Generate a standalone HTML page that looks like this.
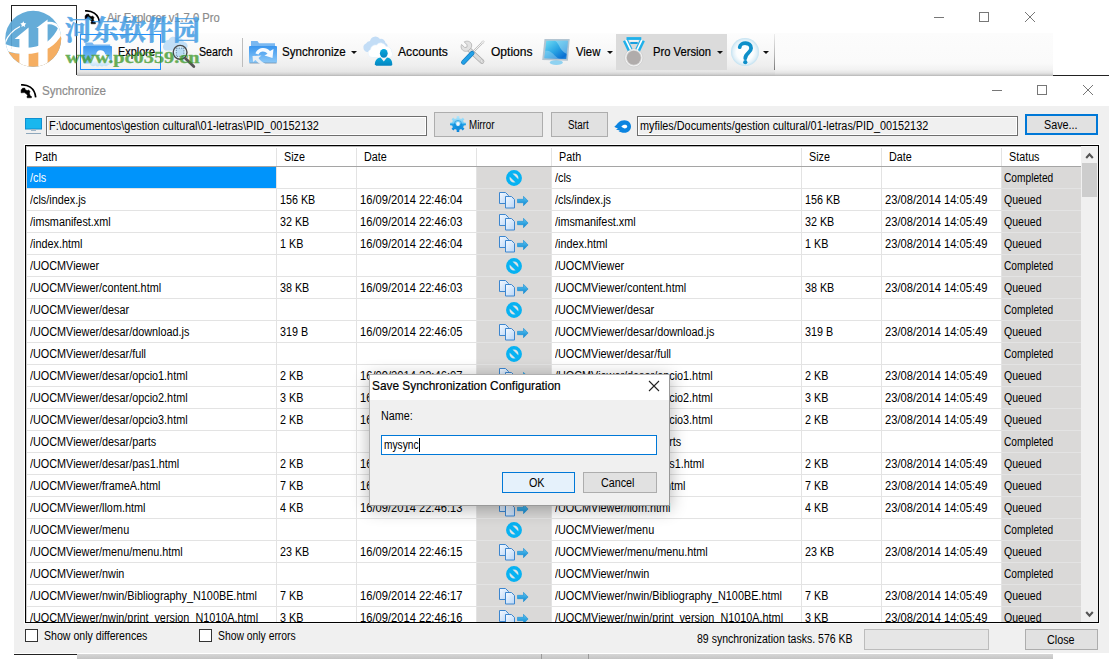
<!DOCTYPE html>
<html><head><meta charset="utf-8"><title>Air Explorer</title>
<style>
*{margin:0;padding:0;box-sizing:border-box}
html,body{width:1109px;height:659px;overflow:hidden;background:#fff}
body{position:relative;font-family:"Liberation Sans",sans-serif;font-size:11px;color:#000}
.a{position:absolute}
.t{position:absolute;white-space:nowrap;font-size:12px;line-height:14px;transform:scaleX(.896);transform-origin:0 50%}
.s{position:absolute;white-space:nowrap;font-size:13px;-webkit-text-stroke:.2px currentColor;line-height:16px;transform-origin:0 50%}
.ic{position:absolute;overflow:visible}
svg{position:absolute;overflow:visible}
.btn{position:absolute;background:#e1e1e1;border:1px solid #adadad}
.vl{position:absolute;width:1px;background:#e3e3e3}
.hl{position:absolute;height:1px;background:#e3e3e3}
.arr{position:absolute;width:0;height:0;border-left:3px solid transparent;border-right:3px solid transparent;border-top:3px solid #111}
</style></head><body>
<svg width="0" height="0" style="position:absolute">
<defs>
<linearGradient id="gpage" x1="0" y1="0" x2="1" y2="1"><stop offset="0" stop-color="#f4f9ff"/><stop offset="1" stop-color="#b9d6f7"/></linearGradient>
<linearGradient id="garr" x1="0" y1="0" x2="0" y2="1"><stop offset="0" stop-color="#5cc6f2"/><stop offset="1" stop-color="#0d86cf"/></linearGradient>
<g id="copy">
<path d="M1.5 0.5h6l3 3v8h-9z" fill="url(#gpage)" stroke="#3c86cf" stroke-width="1"/>
<path d="M7.5 4.5h6l3 3v8.500h-9z" fill="url(#gpage)" stroke="#3c86cf" stroke-width="1"/>
<path d="M19.500 7.300h6v-3l4.600 4.700-4.600 4.700v-3h-6z" fill="url(#garr)" stroke="#1a8ed6" stroke-width=".6" stroke-linejoin="round"/>
</g>
<g id="ban">
<circle cx="9" cy="9" r="6.200" fill="#dde3e6" stroke="#07b2f2" stroke-width="3.500"/>
<path d="M4.200 4.200L13.800 13.800" stroke="#07b2f2" stroke-width="4.200"/>
</g>
</defs></svg>

<!-- background outline (top-left) -->
<div class="a" style="left:11px;top:5px;width:66px;height:1px;background:#222"></div>
<div class="a" style="left:11px;top:5px;width:1px;height:44px;background:#222"></div>
<div class="a" style="left:76px;top:5px;width:1px;height:70px;background:#333"></div>

<!-- MAIN WINDOW -->
<div class="a" id="toolbar" style="left:77px;top:33px;width:698px;height:43px;background:linear-gradient(#fdfdfd 0%,#f8f8f8 40%,#efefef 75%,#e6e6e6 90%,#d2d2d2 96%,#b4b4b4 100%)"></div>
<div class="a" style="left:775px;top:33px;width:278px;height:43px;background:linear-gradient(#fcfcfc 0%,#fafafa 70%,#f2f2f2 85%,#e4e4e4 93%,#cfcfcf 97%,#b4b4b4 100%)"></div>
<div class="a" style="left:1053px;top:75px;width:56px;height:1px;background:#222"></div>
<!-- title -->
<svg style="left:84px;top:9.200px" width="17" height="16" viewBox="0 0 17 16"><path d="M1.100 1.900C7 1.200 14.800 4.500 15.700 14.400" fill="none" stroke="#000" stroke-width="1.700"/><path d="M1.100 6.900L2.500 5.300 4.700 5.100 5.500 6.900 7.600 7.600 8.600 6.900 10 8.400 9.400 10.200 10.200 12.800 11.600 13.600 11.400 14.800H7.200L7 13.600 7.600 12.400 6.300 10.800 4.300 9.600 1.100 9.800z" fill="#000" stroke="#000" stroke-width=".5" stroke-linejoin="round"/></svg>
<span class="s" id="tTitle" style="transform:scaleX(0.862);left:107px;top:10px;color:#8c8c8c">Air Explorer v1.7.0 Pro</span>
<!-- main window controls -->
<div class="a" style="left:934px;top:17px;width:10px;height:1px;background:#777"></div>
<div class="a" style="left:979px;top:12px;width:10px;height:10px;border:1px solid #777"></div>
<svg style="left:1025px;top:12px" width="10" height="10" viewBox="0 0 10 10"><path d="M0 0L10 10M10 0L0 10" stroke="#777" stroke-width="1"/></svg>

<!-- toolbar items -->
<div class="a" style="left:80px;top:34px;width:81px;height:36px;border:1px solid #1e90ff;background:rgba(255,255,255,.3)"></div>
<!-- explore icon -->
<svg style="left:82px;top:41px" width="31" height="28" viewBox="0 0 31 28">
<defs><linearGradient id="gf" x1="0" y1="0" x2="0" y2="1"><stop offset="0" stop-color="#3b96ee"/><stop offset="1" stop-color="#8cc9f8"/></linearGradient>
<linearGradient id="gcl" x1="0" y1="0" x2="0" y2="1"><stop offset="0" stop-color="#fff"/><stop offset=".6" stop-color="#f4f9fe"/><stop offset="1" stop-color="#bfe0f6"/></linearGradient></defs>
<path d="M3.300 1.600h7l1.500 2h16.400v5H3.300z" fill="#7ab8f1"/>
<rect x="1.200" y="5" width="28.800" height="17.500" rx="1" fill="url(#gf)"/>
<path d="M9 24.500a3.600 3.600 0 0 1 .6-6.500 4.800 4.800 0 0 1 4.700-4.200 4 4 0 0 1 4.200-4.600 5 5 0 0 1 4.700 4 4.500 4.500 0 0 1 3.600 4.600 3.600 3.600 0 0 1-.8 6.500q-2 1.500-4 .3-2 1.800-4.200 0-2.300 1.700-4.400 0-2.300 1.200-4.400-.1z" fill="url(#gcl)"/>
</svg>
<span class="s" id="tExplore" style="transform:scaleX(0.84);left:118px;top:44px">Explore</span>
<!-- search icon -->
<svg style="left:163px;top:35px" width="34" height="34" viewBox="0 0 34 34">
<path d="M2.500 15.500a4 4 0 0 1-1.500-6.500 4.500 4.500 0 0 1 4.500-4 5 5 0 0 1 8.500-1.500 5 5 0 0 1 7 3.500 4 4 0 0 1 3.500 5l-3 4z" fill="#b7d9f6" opacity=".85"/>
<circle cx="17.100" cy="17.300" r="6.900" fill="#d4ecfa" stroke="#4a4a4a" stroke-width="1.400"/>
<rect x="13.300" y="13.200" width="7.600" height="8.200" fill="#b9ddf5" stroke="#3d5a78" stroke-width=".7" stroke-dasharray="1.200 1.200"/>
<path d="M22.500 23.500l8.300 8" stroke="#555" stroke-width="2.800" stroke-linecap="round"/>
</svg>
<span class="s" id="tSearch" style="transform:scaleX(0.82);left:199px;top:44px">Search</span>
<div class="a" style="left:242px;top:38px;width:1px;height:29px;background:#bdbdbd"></div>
<!-- sync icon -->
<svg style="left:248px;top:40px" width="30" height="27" viewBox="0 0 30 27">
<defs><linearGradient id="gf2" x1="0" y1="0" x2="0" y2="1"><stop offset="0" stop-color="#3b96ee"/><stop offset="1" stop-color="#8cc9f8"/></linearGradient></defs>
<path d="M3 1h6.500l1.500 2.300h16v5H3z" fill="#7ab8f1"/>
<rect x="1" y="6" width="28" height="17" rx="1" fill="url(#gf2)"/>
<rect x="1.500" y="22.600" width="27" height=".9" fill="#5e7f9c" opacity=".7"/>
<path d="M7.500 13.500C9 7.500 18 6 22 11l3.500-2-1 9-8-2.500 3-1.800C16.500 10.500 12 11 10.500 14.500z" fill="#fff" opacity=".95"/>
<path d="M4.500 16l9-.5-3 2.500c1.500 2.500 4 4.500 6.500 5.500l-1 2c-4-1-6.500-3-8.500-5.500l-2.500 2z" fill="#eef1f4" opacity=".95"/>
</svg>
<span class="s" id="tSync" style="transform:scaleX(0.89);left:282px;top:44px">Synchronize</span>
<div class="arr" style="left:351px;top:51px"></div>
<!-- accounts icon -->
<svg style="left:362px;top:35px" width="32" height="32" viewBox="0 0 32 32">
<defs><linearGradient id="gp" x1="0" y1="0" x2="0" y2="1"><stop offset="0" stop-color="#04a9dc"/><stop offset="1" stop-color="#0584c0"/></linearGradient></defs>
<path d="M5 17a4.500 4.500 0 0 1-1-8.500 5 5 0 0 1 4-2.500 5.500 5.500 0 0 1 10-2 4.500 4.500 0 0 1 5.500 4 4 4 0 0 1 2 4.500l-6 5z" fill="#c3ddf6"/>
<path d="M10 22.500a4.200 4.200 0 0 1-1.500-8 5 5 0 0 1 6-4.500 5.500 5.500 0 0 1 9.500 1.500 4.800 4.800 0 0 1 5.500 5 3.500 3.500 0 0 1-2 6z" fill="#fff" stroke="#e3f0fb" stroke-width=".6"/>
<ellipse cx="21.800" cy="18.300" rx="3.900" ry="4.400" fill="url(#gp)"/>
<path d="M12.800 29.500c.3-5 3-6.500 5.800-7l3.200 4 3.200-4c2.800.5 5.300 2 5.300 7 0 .8-.6 1.200-1.500 1.200h-14.500c-.9 0-1.500-.4-1.500-1.200z" fill="url(#gp)"/>
</svg>
<span class="s" id="tAcc" style="transform:scaleX(0.932);left:398px;top:44px">Accounts</span>
<!-- options icon -->
<svg style="left:459px;top:39px" width="27" height="27" viewBox="0 0 27 27">
<path d="M9.500 10L23 22.500" stroke="#a4a4a4" stroke-width="4.600" stroke-linecap="round"/>
<path d="M9.500 10L23 22.500" stroke="#dcdcdc" stroke-width="3.400" stroke-linecap="round"/>
<circle cx="22.300" cy="22" r="1.100" fill="#fff" stroke="#aaa" stroke-width=".5"/>
<path transform="translate(1.300,1.800) scale(.88)" d="M4.500 1.200l3.300 3.500-.3 2.500-2.500.5-3.500-3.500c-1.500 3 0 6.500 3 7.500 2 .6 3.800.1 5-.8l2.500-2.500c1-1.500 1.300-3.200.6-5-1-2.500-4.500-4-8.100-2.200z" fill="#e2e2e2" stroke="#a6a6a6" stroke-width=".8"/>
<path d="M13.500 13.500L23 4" stroke="#b5b5b5" stroke-width="1.800"/><path d="M13.500 13.500L23 4" stroke="#f4f4f4" stroke-width="1"/>
<path d="M22 3.200l2.500-1.500.8.800-1.500 2.500z" fill="#eee" stroke="#bbb" stroke-width=".5"/>
<path d="M13.200 14.200L4.400 23.300" stroke="#1577b8" stroke-width="4.600" stroke-linecap="round"/>
<path d="M13.200 14.200L4.400 23.300" stroke="#23a0e6" stroke-width="3.400" stroke-linecap="round"/>
</svg>
<span class="s" id="tOpt" style="transform:scaleX(0.927);left:491px;top:44px">Options</span>
<!-- view icon -->
<svg style="left:542px;top:38px" width="29" height="28" viewBox="0 0 29 28">
<defs><linearGradient id="gm" x1="0" y1="0" x2="1" y2="1"><stop offset="0" stop-color="#72def5"/><stop offset=".5" stop-color="#2aa5e4"/><stop offset=".85" stop-color="#0a70d2"/><stop offset="1" stop-color="#2a8fdc"/></linearGradient></defs>
<ellipse cx="14.300" cy="24.600" rx="6.500" ry="2.500" fill="#8fd2f1"/>
<path d="M2.500 1L27.700 1 25.900 22.800 .2 21.900z" fill="#b3c5d2"/>
<path d="M4.300 2.700L25.800 2.700 24.300 20.900 2.400 20.200z" fill="url(#gm)"/>
<path d="M13 2.700C18 6 17 12 24.800 16l1-13.300z" fill="#bfeaf8" opacity=".45"/>
<path d="M3.300 13C9 11 12 18 17 20.600l-14.600-.4z" fill="#bfe6f8" opacity=".35"/>
</svg>
<span class="s" id="tView" style="transform:scaleX(0.87);left:576px;top:44px">View</span>
<div class="arr" style="left:607px;top:51px"></div>
<!-- pro version -->
<div class="a" style="left:616px;top:34px;width:111px;height:36px;background:#dbdbdb"></div>
<svg style="left:621px;top:36px" width="26" height="32" viewBox="0 0 26 32">
<path d="M4.300 4.200L9.300 14.500" stroke="#1fb0ea" stroke-width="5.200"/>
<path d="M21.500 4.200L16.500 14.500" stroke="#1fb0ea" stroke-width="5.200"/>
<path d="M4.800 3.700L9.800 14" stroke="#fff" stroke-width="1.700"/>
<path d="M21 3.700L16 14" stroke="#fff" stroke-width="1.700"/>
<path d="M5.500 2.500H20.300" stroke="#1fb0ea" stroke-width="2.800"/>
<path d="M8.500 4.900H17.500" stroke="#fff" stroke-width="1.300"/>
<path d="M9.300 7H16.700" stroke="#1a9fe0" stroke-width="2"/>
<circle cx="12.800" cy="21.800" r="7" fill="#b0acab"/><circle cx="12.800" cy="21.800" r="8.300" fill="none" stroke="#f6f6f6" stroke-width="1"/>
<circle cx="12.800" cy="21.800" r="9.100" fill="none" stroke="#c4c4c4" stroke-width=".4"/>
</svg>
<span class="s" id="tPro" style="transform:scaleX(0.863);left:653px;top:44px">Pro Version</span>
<div class="arr" style="left:717px;top:51px"></div>
<!-- help -->
<svg style="left:731px;top:37.700px" width="28" height="28" viewBox="0 0 28 28">
<defs><radialGradient id="gh" cx=".5" cy=".5" r=".5"><stop offset="0" stop-color="#fff"/><stop offset=".6" stop-color="#fbfdfe"/><stop offset=".85" stop-color="#e1f0f8"/><stop offset="1" stop-color="#c3e2f1"/></radialGradient></defs>
<circle cx="14" cy="14" r="14" fill="url(#gh)"/>
<path d="M8.700 9.200C9.500 3.700 20.300 3.800 20.100 10.200 20 14.800 14.300 15 14.300 20.200" fill="none" stroke="#0e8fc9" stroke-width="3.800" stroke-linecap="round"/>
<circle cx="14.300" cy="24.200" r="2.100" fill="#0e8fc9"/>
</svg>
<div class="arr" style="left:763px;top:51px"></div>
<div class="a" style="left:774px;top:34px;width:1px;height:36px;background:linear-gradient(#eee,#b5b5b5 60%,#777)"></div>

<!-- main window status bar peeking at bottom -->
<div class="a" style="left:77px;top:654px;width:976px;height:5px;background:linear-gradient(#d6d6d6,#c4c4c4)"></div>
<div class="a" style="left:541px;top:654px;width:1px;height:5px;background:#9a9a9a"></div>
<div class="a" style="left:588px;top:654px;width:1px;height:5px;background:#9a9a9a"></div>
<div class="a" style="left:14px;top:654px;width:63px;height:1px;background:#222"></div>

<!-- SYNC WINDOW -->
<div class="a" style="left:14px;top:76px;width:1095px;height:30px;background:#fff"></div>
<div class="a" style="left:14px;top:106px;width:1095px;height:547px;background:#f0f0f0"></div>
<svg style="left:20px;top:83px" width="17" height="16" viewBox="0 0 17 16"><path d="M1.100 1.900C7 1.200 14.800 4.500 15.700 14.400" fill="none" stroke="#000" stroke-width="1.700"/><path d="M1.100 6.900L2.500 5.300 4.700 5.100 5.500 6.900 7.600 7.600 8.600 6.900 10 8.400 9.400 10.200 10.200 12.800 11.600 13.600 11.400 14.800H7.200L7 13.600 7.600 12.400 6.300 10.800 4.300 9.600 1.100 9.800z" fill="#000" stroke="#000" stroke-width=".5" stroke-linejoin="round"/></svg>
<span class="s" id="tSyncT" style="transform:scaleX(0.895);left:42px;top:83px;color:#8c8c8c">Synchronize</span>
<div class="a" style="left:992px;top:90px;width:10px;height:1px;background:#777"></div>
<div class="a" style="left:1037px;top:85px;width:10px;height:10px;border:1px solid #777"></div>
<svg style="left:1083px;top:85px" width="10" height="10" viewBox="0 0 10 10"><path d="M0 0L10 10M10 0L0 10" stroke="#777" stroke-width="1"/></svg>

<!-- path row -->
<svg style="left:25px;top:118px" width="17" height="17" viewBox="0 0 17 17">
<rect x=".5" y=".5" width="16" height="10.500" fill="#19b7ee" stroke="#0f8fd0" stroke-width="1"/>
<rect x="6" y="11" width="5" height="2" fill="#9fb6c8"/><rect x="1" y="15" width="15" height="1" fill="#8ea7bb"/>
</svg>
<div class="a" style="left:46px;top:116px;width:381px;height:20px;border:1px solid #6e6e6e;background:#f0f0f0;box-shadow:inset 0 0 0 1px #fff"></div>
<span class="t" id="tPathL" style="transform:scaleX(.909);left:49px;top:119px">F:\documentos\gestion cultural\01-letras\PID_00152132</span>
<div class="btn" style="left:434px;top:112px;width:109px;height:25px"></div>
<svg style="left:449px;top:114.800px" width="18" height="18" viewBox="0 0 18 18">
<defs><linearGradient id="gg" x1="0" y1="0" x2="0" y2="1"><stop offset="0" stop-color="#b4e6fb"/><stop offset=".45" stop-color="#6fcbf5"/><stop offset=".5" stop-color="#1ea0e8"/><stop offset="1" stop-color="#0c84d8"/></linearGradient></defs>
<path d="M7.75 1.10 L10.25 1.10 L10.40 3.17 L12.13 3.88 L13.70 2.53 L15.47 4.30 L14.12 5.87 L14.83 7.60 L16.90 7.75 L16.90 10.25 L14.83 10.40 L14.12 12.13 L15.47 13.70 L13.70 15.47 L12.13 14.12 L10.40 14.83 L10.25 16.90 L7.75 16.90 L7.60 14.83 L5.87 14.12 L4.30 15.47 L2.53 13.70 L3.88 12.13 L3.17 10.40 L1.10 10.25 L1.10 7.75 L3.17 7.60 L3.88 5.87 L2.53 4.30 L4.30 2.53 L5.87 3.88 L7.60 3.17z" fill="url(#gg)"/>
<circle cx="9" cy="9" r="3.600" fill="none" stroke="#0b7fd0" stroke-width="1" opacity=".5"/>
<circle cx="9" cy="9" r="1.900" fill="#f4f8fb"/>
</svg>
<span class="t" id="tMirror" style="transform:scaleX(0.815);left:469px;top:118px">Mirror</span>
<div class="btn" style="left:551px;top:112px;width:57px;height:25px"></div>
<span class="t" id="tStart" style="transform:scaleX(0.815);left:568px;top:118px">Start</span>
<svg style="left:614.300px;top:119.500px" width="17" height="13" viewBox="0 0 17 13">
<path d="M.3 6.800C2 5.500 3 4 4.500 2.500 6 1 8 .2 10.500.2 14.200.2 17 3 17 6.500 17 10 14.200 12.800 10.500 12.800 8 12.800 6 12 4.600 11.200L6 10.300C4.500 10.300 3 10 2.100 9.500L4 8.300C2.500 8 1.300 7.500.3 6.800z" fill="#0b84e0"/>
<path d="M7.300 6.600c1.500-1.800 3.500-2.200 5-1.500 1.300.7 1.300 2.300 0 3-1.500.7-3.500.2-5-1.500z" fill="#fff"/>
</svg>
<div class="a" style="left:637px;top:116px;width:381px;height:20px;border:1px solid #6e6e6e;background:#f0f0f0;box-shadow:inset 0 0 0 1px #fff"></div>
<span class="t" id="tPathR" style="transform:scaleX(.904);left:640px;top:119px">myfiles/Documents/gestion cultural/01-letras/PID_00152132</span>
<div class="btn" style="left:1025px;top:114px;width:73px;height:21px;border:2px solid #0078d7"></div>
<span class="t" id="tSave" style="left:1044px;top:118px">Save...</span>

<!-- list -->
<div class="a" style="left:24px;top:144px;width:1076px;height:480px;border:1px solid #fff;border-right-color:#f8f8f8;border-bottom-color:#f8f8f8"></div>
<div class="a" id="list" style="left:25px;top:145px;width:1074px;height:478px;background:#fff;border:1px solid #000"></div>
<div class="a" style="left:26px;top:146px;width:1072px;height:476px;border:1px solid #cdcdcd;border-top-color:#b5b5b5;border-right-color:#fff;border-bottom-color:#fff"></div>
<!-- grey columns -->
<div class="a" style="left:477px;top:167px;width:74px;height:455px;background:#dad9d8"></div>
<div class="a" style="left:1002px;top:167px;width:79px;height:455px;background:#dad9d8"></div>
<!-- selected -->
<div class="a" style="left:27px;top:167px;width:249px;height:21px;background:#0094fb"></div>
<!-- grid lines -->
<div id="grid"><div class="vl" style="left:276px;top:148px;height:474px"></div><div class="vl" style="left:356px;top:148px;height:474px"></div><div class="vl" style="left:476px;top:148px;height:474px"></div><div class="vl" style="left:551px;top:148px;height:474px"></div><div class="vl" style="left:801px;top:148px;height:474px"></div><div class="vl" style="left:881px;top:148px;height:474px"></div><div class="vl" style="left:1001px;top:148px;height:474px"></div><div class="hl" style="left:27px;top:188px;width:1054px"></div><div class="hl" style="left:27px;top:210px;width:1054px"></div><div class="hl" style="left:27px;top:232px;width:1054px"></div><div class="hl" style="left:27px;top:254px;width:1054px"></div><div class="hl" style="left:27px;top:276px;width:1054px"></div><div class="hl" style="left:27px;top:298px;width:1054px"></div><div class="hl" style="left:27px;top:320px;width:1054px"></div><div class="hl" style="left:27px;top:342px;width:1054px"></div><div class="hl" style="left:27px;top:364px;width:1054px"></div><div class="hl" style="left:27px;top:386px;width:1054px"></div><div class="hl" style="left:27px;top:408px;width:1054px"></div><div class="hl" style="left:27px;top:430px;width:1054px"></div><div class="hl" style="left:27px;top:452px;width:1054px"></div><div class="hl" style="left:27px;top:474px;width:1054px"></div><div class="hl" style="left:27px;top:496px;width:1054px"></div><div class="hl" style="left:27px;top:518px;width:1054px"></div><div class="hl" style="left:27px;top:540px;width:1054px"></div><div class="hl" style="left:27px;top:562px;width:1054px"></div><div class="hl" style="left:27px;top:584px;width:1054px"></div><div class="hl" style="left:27px;top:606px;width:1054px"></div></div>
<div class="hl" style="left:27px;top:166px;width:1054px;background:#a5a5a5"></div>
<!-- header text -->
<span class="t" style="left:35px;top:150px">Path</span>
<span class="t" style="left:284px;top:150px">Size</span>
<span class="t" style="left:364px;top:150px">Date</span>
<span class="t" style="left:559px;top:150px">Path</span>
<span class="t" style="left:809px;top:150px">Size</span>
<span class="t" style="left:889px;top:150px">Date</span>
<span class="t" style="left:1009px;top:150px">Status</span>
<div id="rows" class="a" style="left:0;top:0;width:1098px;height:622px;overflow:hidden">
<span class="t" style="left:30px;top:171px;color:#fff;transform:scaleX(0.903);">/cls</span>
<span class="t" style="left:555px;top:171px;transform:scaleX(0.903);">/cls</span>
<span class="t" style="left:1004px;top:171px;transform:scaleX(0.848);">Completed</span>
<svg class="ic" style="left:505px;top:169px" width="18" height="18" viewBox="0 0 18 18"><use href="#ban"/></svg>
<span class="t" style="left:30px;top:193px;transform:scaleX(0.903);">/cls/index.js</span>
<span class="t" style="left:555px;top:193px;transform:scaleX(0.903);">/cls/index.js</span>
<span class="t" style="left:280px;top:193px;">156 KB</span>
<span class="t" style="left:805px;top:193px;">156 KB</span>
<span class="t" style="left:360px;top:193px;transform:scaleX(0.930);">16/09/2014 22:46:04</span>
<span class="t" style="left:885px;top:193px;transform:scaleX(0.930);">23/08/2014 14:05:49</span>
<span class="t" style="left:1004px;top:193px;transform:scaleX(0.879);">Queued</span>
<svg class="ic" style="left:498px;top:192px" width="32" height="18" viewBox="0 0 32 18"><use href="#copy"/></svg>
<span class="t" style="left:30px;top:215px;transform:scaleX(0.903);">/imsmanifest.xml</span>
<span class="t" style="left:555px;top:215px;transform:scaleX(0.903);">/imsmanifest.xml</span>
<span class="t" style="left:280px;top:215px;">32 KB</span>
<span class="t" style="left:805px;top:215px;">32 KB</span>
<span class="t" style="left:360px;top:215px;transform:scaleX(0.930);">16/09/2014 22:46:03</span>
<span class="t" style="left:885px;top:215px;transform:scaleX(0.930);">23/08/2014 14:05:49</span>
<span class="t" style="left:1004px;top:215px;transform:scaleX(0.879);">Queued</span>
<svg class="ic" style="left:498px;top:214px" width="32" height="18" viewBox="0 0 32 18"><use href="#copy"/></svg>
<span class="t" style="left:30px;top:237px;transform:scaleX(0.903);">/index.html</span>
<span class="t" style="left:555px;top:237px;transform:scaleX(0.903);">/index.html</span>
<span class="t" style="left:280px;top:237px;">1 KB</span>
<span class="t" style="left:805px;top:237px;">1 KB</span>
<span class="t" style="left:360px;top:237px;transform:scaleX(0.930);">16/09/2014 22:46:04</span>
<span class="t" style="left:885px;top:237px;transform:scaleX(0.930);">23/08/2014 14:05:49</span>
<span class="t" style="left:1004px;top:237px;transform:scaleX(0.879);">Queued</span>
<svg class="ic" style="left:498px;top:236px" width="32" height="18" viewBox="0 0 32 18"><use href="#copy"/></svg>
<span class="t" style="left:30px;top:259px;transform:scaleX(0.903);">/UOCMViewer</span>
<span class="t" style="left:555px;top:259px;transform:scaleX(0.903);">/UOCMViewer</span>
<span class="t" style="left:1004px;top:259px;transform:scaleX(0.848);">Completed</span>
<svg class="ic" style="left:505px;top:257px" width="18" height="18" viewBox="0 0 18 18"><use href="#ban"/></svg>
<span class="t" style="left:30px;top:281px;transform:scaleX(0.903);">/UOCMViewer/content.html</span>
<span class="t" style="left:555px;top:281px;transform:scaleX(0.903);">/UOCMViewer/content.html</span>
<span class="t" style="left:280px;top:281px;">38 KB</span>
<span class="t" style="left:805px;top:281px;">38 KB</span>
<span class="t" style="left:360px;top:281px;transform:scaleX(0.930);">16/09/2014 22:46:03</span>
<span class="t" style="left:885px;top:281px;transform:scaleX(0.930);">23/08/2014 14:05:49</span>
<span class="t" style="left:1004px;top:281px;transform:scaleX(0.879);">Queued</span>
<svg class="ic" style="left:498px;top:280px" width="32" height="18" viewBox="0 0 32 18"><use href="#copy"/></svg>
<span class="t" style="left:30px;top:303px;transform:scaleX(0.903);">/UOCMViewer/desar</span>
<span class="t" style="left:555px;top:303px;transform:scaleX(0.903);">/UOCMViewer/desar</span>
<span class="t" style="left:1004px;top:303px;transform:scaleX(0.848);">Completed</span>
<svg class="ic" style="left:505px;top:301px" width="18" height="18" viewBox="0 0 18 18"><use href="#ban"/></svg>
<span class="t" style="left:30px;top:325px;transform:scaleX(0.903);">/UOCMViewer/desar/download.js</span>
<span class="t" style="left:555px;top:325px;transform:scaleX(0.903);">/UOCMViewer/desar/download.js</span>
<span class="t" style="left:280px;top:325px;">319 B</span>
<span class="t" style="left:805px;top:325px;">319 B</span>
<span class="t" style="left:360px;top:325px;transform:scaleX(0.930);">16/09/2014 22:46:05</span>
<span class="t" style="left:885px;top:325px;transform:scaleX(0.930);">23/08/2014 14:05:49</span>
<span class="t" style="left:1004px;top:325px;transform:scaleX(0.879);">Queued</span>
<svg class="ic" style="left:498px;top:324px" width="32" height="18" viewBox="0 0 32 18"><use href="#copy"/></svg>
<span class="t" style="left:30px;top:347px;transform:scaleX(0.903);">/UOCMViewer/desar/full</span>
<span class="t" style="left:555px;top:347px;transform:scaleX(0.903);">/UOCMViewer/desar/full</span>
<span class="t" style="left:1004px;top:347px;transform:scaleX(0.848);">Completed</span>
<svg class="ic" style="left:505px;top:345px" width="18" height="18" viewBox="0 0 18 18"><use href="#ban"/></svg>
<span class="t" style="left:30px;top:369px;transform:scaleX(0.903);">/UOCMViewer/desar/opcio1.html</span>
<span class="t" style="left:555px;top:369px;transform:scaleX(0.903);">/UOCMViewer/desar/opcio1.html</span>
<span class="t" style="left:280px;top:369px;">2 KB</span>
<span class="t" style="left:805px;top:369px;">2 KB</span>
<span class="t" style="left:360px;top:369px;transform:scaleX(0.930);">16/09/2014 22:46:07</span>
<span class="t" style="left:885px;top:369px;transform:scaleX(0.930);">23/08/2014 14:05:49</span>
<span class="t" style="left:1004px;top:369px;transform:scaleX(0.879);">Queued</span>
<svg class="ic" style="left:498px;top:368px" width="32" height="18" viewBox="0 0 32 18"><use href="#copy"/></svg>
<span class="t" style="left:30px;top:391px;transform:scaleX(0.903);">/UOCMViewer/desar/opcio2.html</span>
<span class="t" style="left:555px;top:391px;transform:scaleX(0.903);">/UOCMViewer/desar/opcio2.html</span>
<span class="t" style="left:280px;top:391px;">3 KB</span>
<span class="t" style="left:805px;top:391px;">3 KB</span>
<span class="t" style="left:360px;top:391px;transform:scaleX(0.930);">16/09/2014 22:46:08</span>
<span class="t" style="left:885px;top:391px;transform:scaleX(0.930);">23/08/2014 14:05:49</span>
<span class="t" style="left:1004px;top:391px;transform:scaleX(0.879);">Queued</span>
<svg class="ic" style="left:498px;top:390px" width="32" height="18" viewBox="0 0 32 18"><use href="#copy"/></svg>
<span class="t" style="left:30px;top:413px;transform:scaleX(0.903);">/UOCMViewer/desar/opcio3.html</span>
<span class="t" style="left:555px;top:413px;transform:scaleX(0.903);">/UOCMViewer/desar/opcio3.html</span>
<span class="t" style="left:280px;top:413px;">2 KB</span>
<span class="t" style="left:805px;top:413px;">2 KB</span>
<span class="t" style="left:360px;top:413px;transform:scaleX(0.930);">16/09/2014 22:46:09</span>
<span class="t" style="left:885px;top:413px;transform:scaleX(0.930);">23/08/2014 14:05:49</span>
<span class="t" style="left:1004px;top:413px;transform:scaleX(0.879);">Queued</span>
<svg class="ic" style="left:498px;top:412px" width="32" height="18" viewBox="0 0 32 18"><use href="#copy"/></svg>
<span class="t" style="left:30px;top:435px;transform:scaleX(0.903);">/UOCMViewer/desar/parts</span>
<span class="t" style="left:555px;top:435px;transform:scaleX(0.903);">/UOCMViewer/desar/parts</span>
<span class="t" style="left:1004px;top:435px;transform:scaleX(0.848);">Completed</span>
<svg class="ic" style="left:505px;top:433px" width="18" height="18" viewBox="0 0 18 18"><use href="#ban"/></svg>
<span class="t" style="left:30px;top:457px;transform:scaleX(0.903);">/UOCMViewer/desar/pas1.html</span>
<span class="t" style="left:555px;top:457px;transform:scaleX(0.903);">/UOCMViewer/desar/pas1.html</span>
<span class="t" style="left:280px;top:457px;">2 KB</span>
<span class="t" style="left:805px;top:457px;">2 KB</span>
<span class="t" style="left:360px;top:457px;transform:scaleX(0.930);">16/09/2014 22:46:10</span>
<span class="t" style="left:885px;top:457px;transform:scaleX(0.930);">23/08/2014 14:05:49</span>
<span class="t" style="left:1004px;top:457px;transform:scaleX(0.879);">Queued</span>
<svg class="ic" style="left:498px;top:456px" width="32" height="18" viewBox="0 0 32 18"><use href="#copy"/></svg>
<span class="t" style="left:30px;top:479px;transform:scaleX(0.903);">/UOCMViewer/frameA.html</span>
<span class="t" style="left:555px;top:479px;transform:scaleX(0.903);">/UOCMViewer/frameA.html</span>
<span class="t" style="left:280px;top:479px;">7 KB</span>
<span class="t" style="left:805px;top:479px;">7 KB</span>
<span class="t" style="left:360px;top:479px;transform:scaleX(0.930);">16/09/2014 22:46:12</span>
<span class="t" style="left:885px;top:479px;transform:scaleX(0.930);">23/08/2014 14:05:49</span>
<span class="t" style="left:1004px;top:479px;transform:scaleX(0.879);">Queued</span>
<svg class="ic" style="left:498px;top:478px" width="32" height="18" viewBox="0 0 32 18"><use href="#copy"/></svg>
<span class="t" style="left:30px;top:501px;transform:scaleX(0.903);">/UOCMViewer/llom.html</span>
<span class="t" style="left:555px;top:501px;transform:scaleX(0.903);">/UOCMViewer/llom.html</span>
<span class="t" style="left:280px;top:501px;">4 KB</span>
<span class="t" style="left:805px;top:501px;">4 KB</span>
<span class="t" style="left:360px;top:501px;transform:scaleX(0.930);">16/09/2014 22:46:13</span>
<span class="t" style="left:885px;top:501px;transform:scaleX(0.930);">23/08/2014 14:05:49</span>
<span class="t" style="left:1004px;top:501px;transform:scaleX(0.879);">Queued</span>
<svg class="ic" style="left:498px;top:500px" width="32" height="18" viewBox="0 0 32 18"><use href="#copy"/></svg>
<span class="t" style="left:30px;top:523px;transform:scaleX(0.903);">/UOCMViewer/menu</span>
<span class="t" style="left:555px;top:523px;transform:scaleX(0.903);">/UOCMViewer/menu</span>
<span class="t" style="left:1004px;top:523px;transform:scaleX(0.848);">Completed</span>
<svg class="ic" style="left:505px;top:521px" width="18" height="18" viewBox="0 0 18 18"><use href="#ban"/></svg>
<span class="t" style="left:30px;top:545px;transform:scaleX(0.903);">/UOCMViewer/menu/menu.html</span>
<span class="t" style="left:555px;top:545px;transform:scaleX(0.903);">/UOCMViewer/menu/menu.html</span>
<span class="t" style="left:280px;top:545px;">23 KB</span>
<span class="t" style="left:805px;top:545px;">23 KB</span>
<span class="t" style="left:360px;top:545px;transform:scaleX(0.930);">16/09/2014 22:46:15</span>
<span class="t" style="left:885px;top:545px;transform:scaleX(0.930);">23/08/2014 14:05:49</span>
<span class="t" style="left:1004px;top:545px;transform:scaleX(0.879);">Queued</span>
<svg class="ic" style="left:498px;top:544px" width="32" height="18" viewBox="0 0 32 18"><use href="#copy"/></svg>
<span class="t" style="left:30px;top:567px;transform:scaleX(0.903);">/UOCMViewer/nwin</span>
<span class="t" style="left:555px;top:567px;transform:scaleX(0.903);">/UOCMViewer/nwin</span>
<span class="t" style="left:1004px;top:567px;transform:scaleX(0.848);">Completed</span>
<svg class="ic" style="left:505px;top:565px" width="18" height="18" viewBox="0 0 18 18"><use href="#ban"/></svg>
<span class="t" style="left:30px;top:589px;transform:scaleX(0.903);">/UOCMViewer/nwin/Bibliography_N100BE.html</span>
<span class="t" style="left:555px;top:589px;transform:scaleX(0.903);">/UOCMViewer/nwin/Bibliography_N100BE.html</span>
<span class="t" style="left:280px;top:589px;">7 KB</span>
<span class="t" style="left:805px;top:589px;">7 KB</span>
<span class="t" style="left:360px;top:589px;transform:scaleX(0.930);">16/09/2014 22:46:17</span>
<span class="t" style="left:885px;top:589px;transform:scaleX(0.930);">23/08/2014 14:05:49</span>
<span class="t" style="left:1004px;top:589px;transform:scaleX(0.879);">Queued</span>
<svg class="ic" style="left:498px;top:588px" width="32" height="18" viewBox="0 0 32 18"><use href="#copy"/></svg>
<span class="t" style="left:30px;top:611px;transform:scaleX(0.903);">/UOCMViewer/nwin/print_version_N1010A.html</span>
<span class="t" style="left:555px;top:611px;transform:scaleX(0.903);">/UOCMViewer/nwin/print_version_N1010A.html</span>
<span class="t" style="left:280px;top:611px;">3 KB</span>
<span class="t" style="left:805px;top:611px;">3 KB</span>
<span class="t" style="left:360px;top:611px;transform:scaleX(0.930);">16/09/2014 22:46:16</span>
<span class="t" style="left:885px;top:611px;transform:scaleX(0.930);">23/08/2014 14:05:49</span>
<span class="t" style="left:1004px;top:611px;transform:scaleX(0.879);">Queued</span>
<svg class="ic" style="left:498px;top:610px" width="32" height="18" viewBox="0 0 32 18"><use href="#copy"/></svg>
</div>
<!-- scrollbar -->
<div class="a" style="left:1081px;top:146px;width:17px;height:476px;background:#f0f0f0"></div>
<div class="a" style="left:1082px;top:163px;width:15px;height:34px;background:#cdcdcd"></div>
<svg style="left:1085.200px;top:151.600px" width="9" height="7" viewBox="0 0 9 7"><path d="M1.200 6L4.500 2.300 7.800 6" fill="none" stroke="#555" stroke-width="2.100"/></svg>
<svg style="left:1085px;top:611px" width="9" height="7" viewBox="0 0 9 7"><path d="M1.200 1L4.500 4.700 7.800 1" fill="none" stroke="#555" stroke-width="2.100"/></svg>

<!-- bottom row -->
<div class="a" style="left:25px;top:629px;width:13px;height:13px;border:1px solid #333;background:#fff"></div>
<span class="t" id="tDiff" style="transform:scaleX(0.882);left:44px;top:629px">Show only differences</span>
<div class="a" style="left:199px;top:629px;width:13px;height:13px;border:1px solid #333;background:#fff"></div>
<span class="t" id="tErr" style="transform:scaleX(0.863);left:218px;top:629px">Show only errors</span>
<span class="t" id="tTasks" style="transform:scaleX(0.877);left:697px;top:632px">89 synchronization tasks. 576 KB</span>
<div class="a" style="left:864px;top:629px;width:125px;height:21px;background:#e6e6e6;border:1px solid #bcbcbc"></div>
<div class="btn" style="left:1025px;top:629px;width:73px;height:21px"></div>
<span class="t" id="tClose" style="left:1047px;top:633px">Close</span>

<!-- DIALOG -->
<div class="a" id="dlg" style="left:369px;top:374px;width:301px;height:132px;background:#f0f0f0;border:1px solid #999;border-top-color:#b0b0b0;border-left-color:#b0b0b0;box-shadow:0 3px 16px rgba(0,0,0,.3)">
<div class="a" style="left:0;top:0;width:299px;height:25px;background:#fff"></div>
</div>
<span class="s" id="tDlg" style="transform:scaleX(0.913);left:372px;top:378px">Save Synchronization Configuration</span>
<svg style="left:649px;top:381px" width="10" height="10" viewBox="0 0 10 10"><path d="M0 0L10 10M10 0L0 10" stroke="#222" stroke-width="1.100"/></svg>
<span class="t" id="tName" style="left:381px;top:409px">Name:</span>
<div class="a" style="left:381px;top:435px;width:276px;height:20px;background:#fff;border:1px solid #0078d7"></div>
<span class="t" id="tMy" style="transform:scaleX(0.848);left:384px;top:438px">mysync</span>
<div class="a" style="left:419px;top:438px;width:1px;height:14px;background:#000"></div>
<div class="btn" style="left:502px;top:472px;width:73px;height:21px;background:#e5f1fb;border-color:#0078d7"></div>
<span class="t" id="tOK" style="left:529px;top:476px">OK</span>
<div class="btn" style="left:583px;top:472px;width:74px;height:21px"></div>
<span class="t" id="tCancel" style="left:601px;top:476px">Cancel</span>

<!-- WATERMARK -->
<svg style="left:0;top:0" width="210" height="80" viewBox="0 0 210 80">
<g id="logo" opacity=".93">
<defs><clipPath id="lc"><circle cx="33.200" cy="38.800" r="28"/></clipPath></defs>
<g clip-path="url(#lc)">
<rect x="0" y="0" width="70" height="80" fill="#5aa6d6"/>
<path d="M0 48 Q 33 66 64 30 L70 80 L0 80z" fill="#f5a857"/>
<path d="M3 46.500 Q 28 56 48 45 Q 57 39 62 27" fill="none" stroke="#fff" stroke-width="6.300"/>
<path d="M5 43 Q 9 32 20 26.500" fill="none" stroke="#fff" stroke-width="1.300"/>
<path d="M47 23.300 Q 54 22 59.500 28" fill="none" stroke="#fff" stroke-width="2.600"/>
<path d="M14.600 39 L28.600 27.400 V70 H19.400 V39z" fill="#fff"/>
<path d="M36.400 28 L47.600 19.600 V70 H38.300 V28z" fill="#fff"/>
<path d="M23.300 21.200l.9 1.900 2.100.3-1.500 1.500.4 2.100-1.900-1-1.900 1 .4-2.100-1.500-1.500 2.100-.3z" fill="#fff"/>
</g>
</g>
<text x="65" y="40.400" font-family="'Liberation Serif','Noto Serif CJK SC',serif" font-weight="bold" font-size="27" textLength="135" lengthAdjust="spacingAndGlyphs" fill="#3f9be3" stroke="#3f9be3" stroke-width=".6" opacity=".85">河东软件园</text>
<text x="65.500" y="62.500" font-family="Liberation Serif" font-weight="bold" font-size="17" textLength="134" lengthAdjust="spacingAndGlyphs" fill="#379623" stroke="#379623" stroke-width=".35" opacity=".75">www.pc0359.cn</text>
</svg>


</body></html>
